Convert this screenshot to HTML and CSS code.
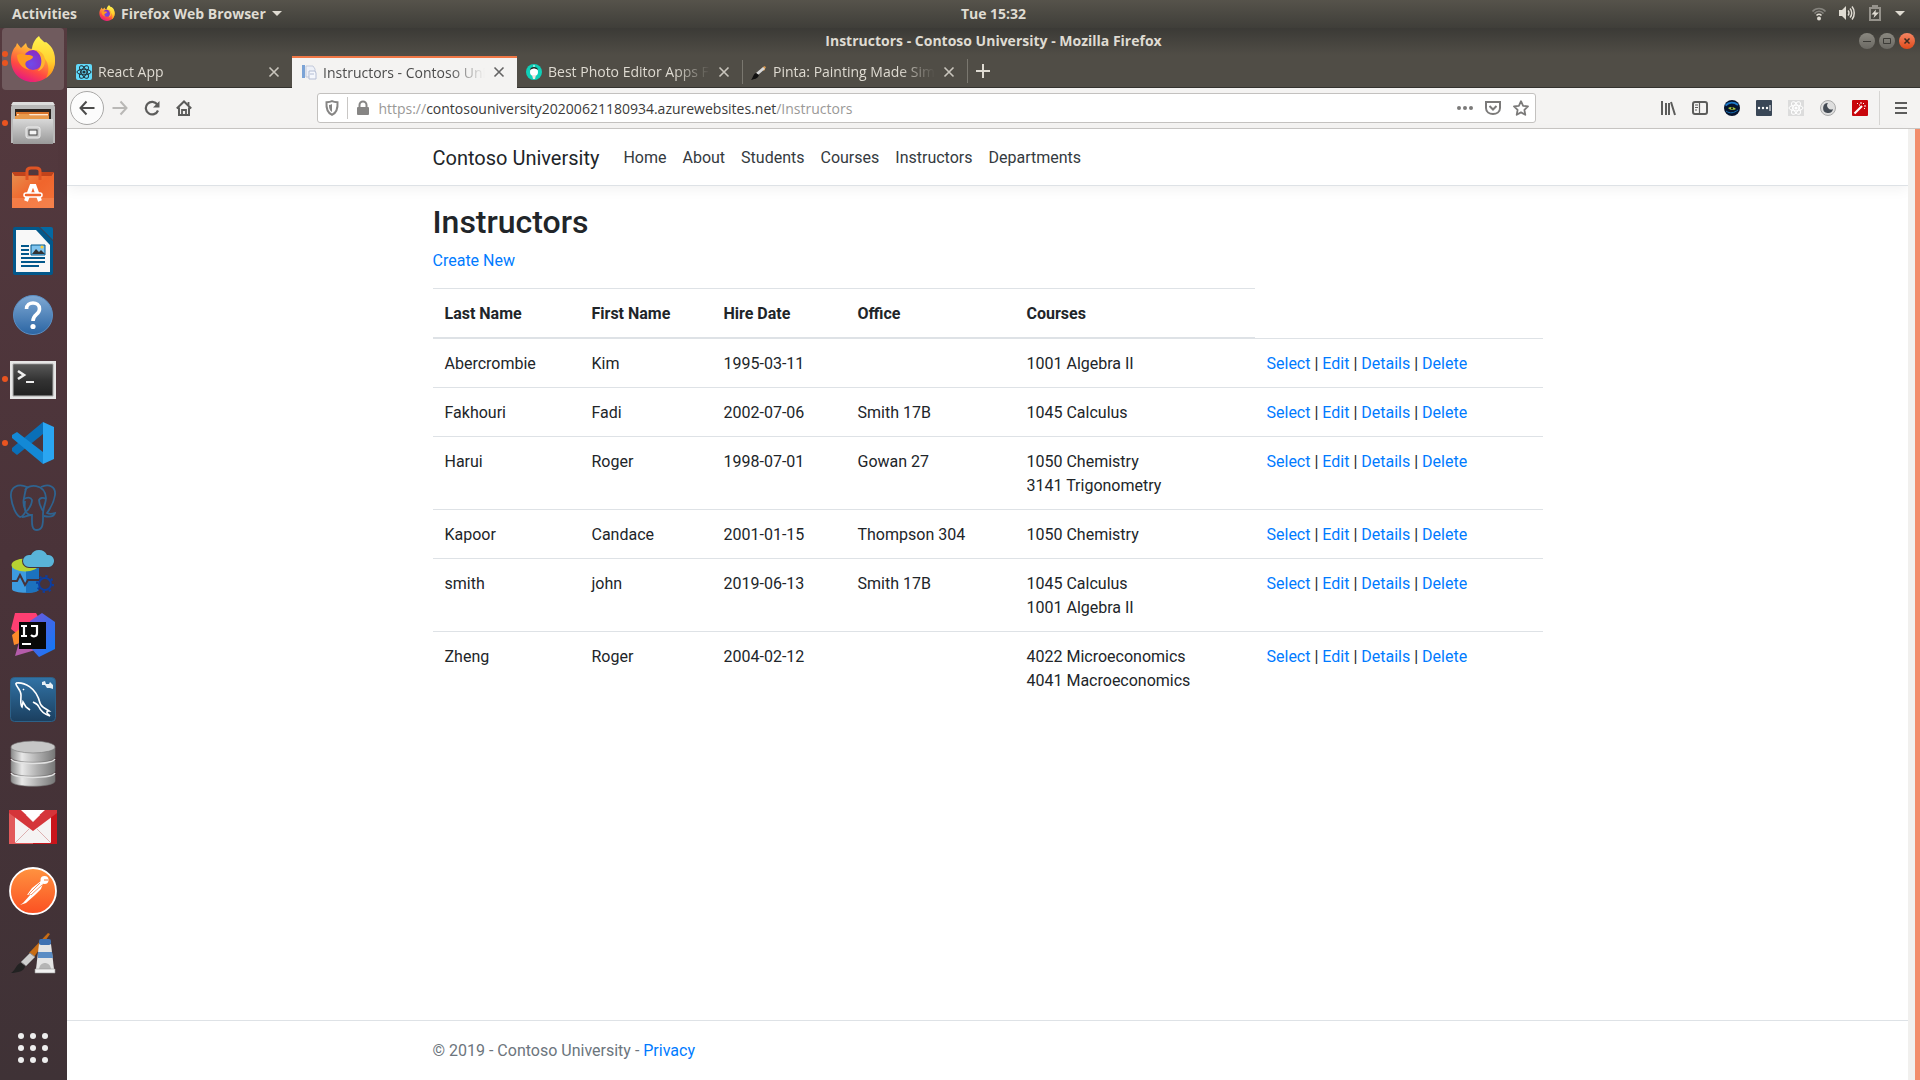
FILE: index.html
```html
<!DOCTYPE html>
<html lang="en">
<head>
<meta charset="utf-8">
<title>Instructors - Contoso University</title>
<link rel="stylesheet" href="styles.css">
</head>
<body>
<svg class="defs" aria-hidden="true">
  <defs>
    <linearGradient id="fx-body" x1="0.8" y1="0" x2="0.3" y2="1"><stop offset="0" stop-color="#fff44f"/><stop offset=".35" stop-color="#ffa436"/><stop offset=".7" stop-color="#ff4a42"/><stop offset="1" stop-color="#e31587"/></linearGradient>
    <linearGradient id="fx-flame" x1="0" y1="0" x2="0" y2="1"><stop offset="0" stop-color="#fff44f"/><stop offset=".6" stop-color="#ffd02f"/><stop offset="1" stop-color="#ff8a16"/></linearGradient>
    <radialGradient id="fx-globe" cx=".4" cy=".7" r=".7"><stop offset="0" stop-color="#6f4bea"/><stop offset="1" stop-color="#8a2bc2"/></radialGradient>
    <linearGradient id="steel" x1="0" y1="0" x2="0" y2="1"><stop offset="0" stop-color="#d8d8d8"/><stop offset="1" stop-color="#999"/></linearGradient>
    <linearGradient id="disk" x1="0" y1="0" x2="1" y2="0"><stop offset="0" stop-color="#8a8a8a"/><stop offset=".25" stop-color="#e8e8e8"/><stop offset=".6" stop-color="#b0b0b0"/><stop offset="1" stop-color="#777"/></linearGradient>
    <linearGradient id="bag" x1="0" y1="0" x2="1" y2="1"><stop offset="0" stop-color="#e79150"/><stop offset=".5" stop-color="#f0652c"/><stop offset="1" stop-color="#f4733a"/></linearGradient>
    <linearGradient id="help" x1="0" y1="0" x2="0" y2="1"><stop offset="0" stop-color="#7fa9d4"/><stop offset="1" stop-color="#2b65a3"/></linearGradient>
    <linearGradient id="term" x1="0" y1="0" x2="0" y2="1"><stop offset="0" stop-color="#575757"/><stop offset=".5" stop-color="#333"/><stop offset="1" stop-color="#222"/></linearGradient>
    <linearGradient id="wb" x1="0" y1="0" x2="0" y2="1"><stop offset="0" stop-color="#3173a6"/><stop offset="1" stop-color="#1b3f5f"/></linearGradient>
    <linearGradient id="pm" x1="0" y1="0" x2="0" y2="1"><stop offset="0" stop-color="#ff9340"/><stop offset="1" stop-color="#fb5022"/></linearGradient>
    <linearGradient id="ij-blue" x1="0" y1="0" x2="1" y2="1"><stop offset="0" stop-color="#7655d8"/><stop offset="1" stop-color="#087cfa"/></linearGradient>
    <symbol id="firefox" viewBox="0 0 46 46">
      <path d="M23 46C10 46 1 36 1 24c0-6 2-11 5-14l1-3 4 5 5-5c1 4 2 5 5 6L36 6c7 5 9 11 9 18 0 12-9 22-22 22z" fill="url(#fx-body)"/>
      <path d="M29 0c2 6 16 10 16 25 0 8-4 14-9 17 3-5 3-11 1-16-3-7-11-8-15-12 0-6 3-11 7-14z" fill="url(#fx-flame)"/>
      <circle cx="23" cy="24" r="10" fill="url(#fx-globe)"/>
      <path d="M7 19c5-3 8 0 12 0 2 0 4 1 4 2-1 3-5 3-7 5-2 3 1 6 4 8-8-1-13-8-13-15z" fill="#ff9a1f"/>
      <path d="M25 14c5 0 10 4 10 11 0 5-3 9-7 10 4-5 6-15-3-21z" fill="#ffb52e"/>
    </symbol>
    <symbol id="close" viewBox="0 0 16 16"><path d="M3.500 3.500l9 9m0-9l-9 9" stroke="currentColor" stroke-width="1.600" fill="none"/></symbol>
    <symbol id="atom" viewBox="0 0 16 16"><g fill="none" stroke="currentColor" stroke-width="1"><ellipse cx="8" cy="8" rx="7" ry="2.800"/><ellipse cx="8" cy="8" rx="7" ry="2.800" transform="rotate(60 8 8)"/><ellipse cx="8" cy="8" rx="7" ry="2.800" transform="rotate(120 8 8)"/></g><circle cx="8" cy="8" r="1.600" fill="currentColor"/></symbol>
  </defs>
</svg>

<header class="topbar">
  <div class="topbar-left">
    <button class="bar-button">Activities</button>
    <button class="bar-button app-menu"><svg width="16" height="16"><use href="#firefox"/></svg>Firefox Web Browser<span class="caret"></span></button>
  </div>
  <button class="bar-button clock">Tue 15:32</button>
  <button class="bar-button tray" aria-label="System menu">
    <svg width="16" height="16" viewBox="0 0 16 16" fill="none" stroke-width="1.600"><path d="M1.500 6.500C5 2.500 11 2.500 14.500 6.500" stroke="#85837d"/><path d="M3.500 8.500c2.500-3 6.500-3 9 0" stroke="#85837d"/><path d="M5.500 10.500c1.500-1.600 3.500-1.600 5 0" stroke="#dfdbd2"/><circle cx="8" cy="13.500" r="2" fill="#dfdbd2"/></svg>
    <svg width="16" height="16" viewBox="0 0 16 16" fill="none" stroke="#dfdbd2" stroke-width="1.500"><path d="M0 5h3l4-4v14l-4-4H0z" fill="#dfdbd2" stroke="none"/><path d="M9 5.500c1.300 1.300 1.300 3.700 0 5M11 3.500c2.300 2.400 2.300 6.600 0 9M13 1.500c3 3.500 3 9.500 0 13"/></svg>
    <svg width="16" height="16" viewBox="0 0 16 16"><path d="M5 0h6v2h3v14H2V2h3zM4 4v10h8V4z" fill="#96938c" fill-rule="evenodd"/><path d="M9 4.500L4.500 9.500h3L6.500 13 12 7.500H8.500z" fill="#dfdbd2"/></svg>
    <span class="caret"></span>
  </button>
</header>

<div class="workspace">
  <nav class="dock" aria-label="Applications">
    <button class="app active running-2" aria-label="Firefox"><svg width="46" height="46"><use href="#firefox"/></svg></button>
    <button class="app running" aria-label="Files"><svg width="48" height="48" viewBox="0 0 48 48"><path d="M4 3h40l2 5v36H2V8z" fill="#b9b9b9"/><path d="M4 3h40l2 3H2z" fill="#ddd"/><path d="M6 10h36v12H6z" fill="#2b2522"/><path d="M7 13h33v8H7z" fill="#d9742b"/><path d="M8 15h31v1.500H8z" fill="#ffe9cf"/><path d="M6 17h3l1-2h10l1 2h19v4H6z" fill="#e89a4c"/><path d="M4 20h40v25H4z" fill="url(#steel)"/><rect x="17" y="28" width="14" height="11" rx="2" fill="#c8c8c8" stroke="#eee"/><rect x="20" y="31" width="8" height="5" fill="#f4f4f4" stroke="#444"/></svg></button>
    <button class="app" aria-label="Ubuntu Software"><svg width="48" height="48" viewBox="0 0 48 48"><path d="M3 9l3 4h36l3-4v36H3z" fill="url(#bag)"/><path d="M3 9l3 4h36l3-4H31v3H19V9z" fill="#c2431b"/><path d="M3 35h42v10H3z" fill="#f68a57" opacity=".6"/><path d="M18 17V8q0-3 4-3h5q4 0 4 3v9" fill="none" stroke="#df5424" stroke-width="3"/><path d="M17 38l5.500-15h3L31 38" fill="none" stroke="#fff" stroke-width="4"/><rect x="15" y="30" width="18" height="4" rx="2" fill="#f0652c" stroke="#fff" stroke-width="1.500"/></svg></button>
    <button class="app" aria-label="LibreOffice Writer"><svg width="48" height="48" viewBox="0 0 48 48"><path d="M6 0h24l14 14v32q0 2-2 2H6q-2 0-2-2V2q0-2 2-2z" fill="#02588b"/><path d="M31 0h11q2 0 2 2v11z" fill="#0369a3"/><path d="M7 3h20l14 15v27H7z" fill="#f8f8f8"/><g stroke="#02588b" stroke-width="2"><path d="M12 19h8M12 23h8M12 27h8M12 31h24M12 35h24M12 39h18"/></g><path d="M22 18h14v10H22z" fill="#7fc4ef" stroke="#02588b"/><path d="M23 27l4-5 3 3 2-2 4 4z" fill="#333"/><circle cx="33" cy="20" r="1.500" fill="#fc3"/></svg></button>
    <button class="app" aria-label="Help"><svg width="48" height="48" viewBox="0 0 48 48"><circle cx="24" cy="24" r="19.500" fill="url(#help)" stroke="#5b8fc4"/><path d="M17.500 18c0-8 13-8 13 0 0 6-6.500 5-6.500 12" fill="none" stroke="#fff" stroke-width="3.600"/><circle cx="24" cy="35.500" r="2.600" fill="#fff"/></svg></button>
    <button class="app running" aria-label="Terminal"><svg width="48" height="48" viewBox="0 0 48 48"><path d="M1 6h46v38H1z" fill="#e6e6e6"/><path d="M4 9h40v32H4z" fill="#333" stroke="#aaa"/><path d="M5 10h38v30H5z" fill="url(#term)"/><path d="M9 16l6 4-6 4" fill="none" stroke="#eee" stroke-width="2.600"/><path d="M17 27h8" stroke="#eee" stroke-width="2"/></svg></button>
    <button class="app running" aria-label="Visual Studio Code"><svg width="48" height="48" viewBox="0 0 48 48"><path d="M34 3v12L8 36l-5-4v-3z" fill="#0a6fb8"/><path d="M3 16l5-3 26 20v12L3 19z" fill="#1389d6"/><path d="M34 3l11 5v32l-11 5z" fill="#2aa6f2"/></svg></button>
    <button class="app" aria-label="pgAdmin"><svg width="48" height="48" viewBox="0 0 48 48" fill="none" stroke="#2f638f" stroke-width="1.800"><path d="M18 4C9 0 1 4 2 14c1 9 5 18 9 20 3 0 4-3 6-6-3-5-3-9-2-13 1-4 1-8 3-11z"/><path d="M16 7c3-6 20-7 21 8 0 5-3 9-3 16 0 6 1 16-6 16-6 0-5-8-5-15-7 0-8-6-7-14"/><path d="M32 4c8-4 15 0 14 8-1 7-5 14-8 18 2 1 5 1 8 0-1 4-6 4-11 3M13 34c4 0 5-2 10-2"/><path d="M15 16c3-2 7-2 8 1 0 5-2 7-5 11M37 16c-3-2-6-1-7 1 0 5 2 7 4 11"/></svg></button>
    <button class="app" aria-label="Azure Data Studio"><svg width="48" height="48" viewBox="0 0 48 48"><path d="M3 18v24c0 5 27 5 27 0V18z" fill="#3d9be0"/><path d="M17 20h13v22c0 3-7 4-13 4z" fill="#1c72be"/><ellipse cx="16" cy="18" rx="13.500" ry="6.500" fill="#b7d332"/><path d="M2 34h6l3-6 5 10 3-5h12" fill="none" stroke="#46333a" stroke-width="2"/><path d="M20 20a6 6 0 0 1 0-12h2a9 9 0 0 1 16 0 6 6 0 0 1 2 12z" fill="#59b4d9" stroke="#46333a" stroke-width="2" paint-order="stroke"/><circle cx="36" cy="37" r="6" fill="#46333a" stroke="#0c3ea0" stroke-width="2"/><circle cx="36" cy="37" r="8" fill="none" stroke="#0c3ea0" stroke-width="2" stroke-dasharray="2.300 4"/></svg></button>
    <button class="app" aria-label="IntelliJ IDEA"><svg width="48" height="48" viewBox="0 0 48 48"><path d="M6 2l21 0 8 14-20 12L2 18z" fill="#fe3f72"/><path d="M3 24l10-8 4 14-12 4z" fill="#fc8b2a"/><path d="M6 45l5-17 22 9z" fill="#b55caa"/><path d="M33 2l13 9v27L30 46l-9-10V10z" fill="url(#ij-blue)"/><path d="M10 11h27v27H10z" fill="#080808"/><g fill="none" stroke="#fff" stroke-width="2.200"><path d="M12 15h6M15 15v10M12 25h6M22 15h6v7c0 4-4 4-6 2M13 33h9"/></g></svg></button>
    <button class="app" aria-label="MySQL Workbench"><svg width="48" height="48" viewBox="0 0 48 48"><rect x="1.500" y="2.500" width="45" height="44" rx="4" fill="url(#wb)" stroke="#2d6188"/><path d="M7 8c8-1 20 4 24 20 1 4 5 5 9 8-3 0-3 2 1 5-6-2-9-4-11-9-1-3-4-4-6-5M7 8c-1 3 5 6 5 12 0 5-1 10 1 12l1-5 3 5 4 3M14 14l1 1" fill="none" stroke="#fff" stroke-width="1.600"/><path d="M33 7l3-1 1 3 3 0 1-2 3 3v4l-3-1-3 0-2-3-3 0z" fill="#e7f0f6"/></svg></button>
    <button class="app" aria-label="Database"><svg width="48" height="48" viewBox="0 0 48 48"><g stroke="#777" stroke-width=".6"><path d="M2 36v6c0 7 44 7 44 0v-6z" fill="url(#disk)"/><path d="M2 22v10c0 7 44 7 44 0V22z" fill="url(#disk)"/><path d="M2 8v10c0 7 44 7 44 0V8z" fill="url(#disk)"/><ellipse cx="24" cy="8" rx="22" ry="6" fill="#c6c6c6"/></g><path d="M2 20c3 6 41 6 44 0M2 34c3 6 41 6 44 0" fill="none" stroke="#e2e2e2" stroke-width="1.500"/></svg></button>
    <button class="app" aria-label="Gmail"><svg width="48" height="48" viewBox="0 0 48 48"><path d="M0 7h48v34H0z" fill="#c9151b"/><path d="M0 7h24v34H0z" fill="#e2595a"/><path d="M6 12h36v28H6z" fill="#f5f3f3"/><path d="M6 40l14-14M42 40L28 26" stroke="#ddb0b0"/><path d="M0 7h12l12 12L36 7h12v3L24 28 0 10z" fill="#d5353a"/><path d="M12 7h24L24 18z" fill="#fff"/></svg></button>
    <button class="app" aria-label="Postman"><svg width="48" height="48" viewBox="0 0 48 48"><circle cx="24" cy="24" r="23" fill="url(#pm)" stroke="#fff" stroke-width="1.800"/><circle cx="35.500" cy="13" r="4" fill="#fff"/><path d="M35 13h4" stroke="#f77637"/><path d="M32 14l-9 7-5 7 4-1-8 9-3 2 6-2 9-8 6-6 2-6z" fill="#fff"/><path d="M31 16l-11 11M33 18L22 28" stroke="#f77637" stroke-width=".8"/></svg></button>
    <button class="app" aria-label="Pinta"><svg width="48" height="48" viewBox="0 0 48 48"><path d="M41 3l-2-1-19 20 5 4z" fill="#c76c14"/><path d="M21 22l5 4-9 9-5-4z" fill="#cfcfcf" stroke="#888"/><path d="M12 32l4 3c0 5-8 7-14 7 5-3 5-9 10-10z" fill="#222"/><path d="M27 38l3-25h12l3 25z" fill="#e4e4e4"/><path d="M29 21h14l1 6H29z" fill="#5a8cc4"/><rect x="30" y="8" width="12" height="6" rx="2" fill="#3f72b2"/><path d="M30 38c1-8 11-8 12 0z" fill="#b5b5b5"/><path d="M26 38h20v4H26z" fill="#f2f2f2" stroke="#999" stroke-width=".6"/></svg></button>
    <button class="app show-apps" aria-label="Show applications"><svg width="32" height="32" viewBox="0 0 32 32" fill="#eee"><circle cx="4" cy="4" r="3"/><circle cx="16" cy="4" r="3"/><circle cx="28" cy="4" r="3"/><circle cx="4" cy="16" r="3"/><circle cx="16" cy="16" r="3"/><circle cx="28" cy="16" r="3"/><circle cx="4" cy="28" r="3"/><circle cx="16" cy="28" r="3"/><circle cx="28" cy="28" r="3"/></svg></button>
  </nav>

  <div class="window">
    <div class="titlebar">
      <span class="window-title">Instructors - Contoso University - Mozilla Firefox</span>
      <div class="window-buttons">
        <button class="wbtn" aria-label="Minimize"><svg width="16" height="16" viewBox="0 0 16 16"><path d="M4 8.500h8" stroke="#3c3b37"/></svg></button>
        <button class="wbtn" aria-label="Maximize"><svg width="16" height="16" viewBox="0 0 16 16"><path d="M4.500 5.500h7v5h-7z" fill="none" stroke="#3c3b37"/></svg></button>
        <button class="wbtn wbtn-close" aria-label="Close"><svg width="16" height="16" viewBox="0 0 16 16"><path d="M5.500 5.500l5 5m0-5l-5 5" stroke="#3c2b20" stroke-width="1.500"/></svg></button>
      </div>
    </div>
    <div class="tabs">
      <div class="tab"><svg class="react" width="16" height="16"><use href="#atom"/></svg><span class="tab-label">React App</span><button class="tab-close" aria-label="Close tab"><svg width="16" height="16"><use href="#close"/></svg></button></div>
      <div class="tab tab-active"><svg width="16" height="16" viewBox="0 0 16 16"><path d="M1 1h3v13H1z" fill="#7ba3d6"/><path d="M5 2h7l2 3v8H5z" fill="#eef1f8" stroke="#c3cadb"/><path d="M8 7h6l1 2v6H8z" fill="#f5f7fc" stroke="#b4bdd3"/><path d="M9 10h4" stroke="#b4bdd3"/></svg><span class="tab-label">Instructors - Contoso University</span><button class="tab-close" aria-label="Close tab"><svg width="16" height="16"><use href="#close"/></svg></button></div>
      <div class="tab"><svg width="16" height="16" viewBox="0 0 16 16"><circle cx="8" cy="8" r="8" fill="#0fcfb8"/><circle cx="8" cy="8" r="4" fill="#fff"/><path d="M4 6c0-4 8-4 8 0-3-2-5-2-8 0z" fill="#222"/><path d="M6 11h4l-1 4H7z" fill="#f4e4e0"/><path d="M8 1v2" stroke="#fff"/></svg><span class="tab-label">Best Photo Editor Apps For Linux</span><button class="tab-close" aria-label="Close tab"><svg width="16" height="16"><use href="#close"/></svg></button></div>
      <div class="tab tab-line"><svg width="16" height="16" viewBox="0 0 16 16"><path d="M13 2l2 1-2 4-2-2z" fill="#e09a4a"/><path d="M12 3l2 2-7 6-2-2z" fill="#d8d8d8"/><path d="M5 9l3 2c-1 4-5 4-8 5 2-2 2-6 5-7z" fill="#111"/></svg><span class="tab-label">Pinta: Painting Made Simple</span><button class="tab-close" aria-label="Close tab"><svg width="16" height="16"><use href="#close"/></svg></button></div>
      <button class="new-tab tab-line" aria-label="New tab"><svg width="16" height="16" viewBox="0 0 16 16"><path d="M8 1v14M1 8h14" stroke="currentColor" stroke-width="2"/></svg></button>
    </div>
    <div class="toolbar">
      <div class="nav-buttons">
        <button class="tool back" aria-label="Back"><svg width="16" height="16" viewBox="0 0 16 16" fill="none" stroke="#4c4c4b" stroke-width="2"><path d="M15.500 8H1.500M7.500 1.500L1.500 8l6 6.500"/></svg></button>
        <button class="tool" aria-label="Forward"><svg width="16" height="16" viewBox="0 0 16 16" fill="none" stroke="#b9b8b6" stroke-width="2"><path d="M.5 8h14M8.500 1.500L14.500 8l-6 6.500"/></svg></button>
        <button class="tool" aria-label="Reload"><svg width="16" height="16" viewBox="0 0 16 16"><path d="M13.300 4.500A6.300 6.300 0 1 0 14 10.500" fill="none" stroke="#5c5c5b" stroke-width="2.200"/><path d="M15.500 1v6.500H9z" fill="#5c5c5b"/></svg></button>
        <button class="tool" aria-label="Home"><svg width="16" height="16" viewBox="0 0 16 16" fill="none" stroke="#5c5c5b" stroke-width="2"><path d="M.8 8.500L8 1.500l7.200 7M3 7.500V15h10V7.500" /><path d="M6 15v-5h4v5M12.500 2v3" stroke-width="1.800"/></svg></button>
      </div>
      <div class="urlbar">
        <svg width="16" height="16" viewBox="0 0 16 16"><path d="M8 1.200c2 1 4 1 5.500 1C14 9 12 13 8 14.800 4 13 2 9 2.500 2.200c1.500 0 3.500 0 5.500-1z" fill="none" stroke="#868584" stroke-width="2"/><path d="M8 4v8C5.500 10.500 5 8 5 5c1 0 2-.3 3-1z" fill="#868584"/></svg>
        <span class="url-sep"></span>
        <svg width="16" height="16" viewBox="0 0 16 16"><path d="M4.500 8V5a3.500 3.500 0 0 1 7 0v3" fill="none" stroke="#868584" stroke-width="2"/><rect x="2" y="7" width="12" height="8" rx="1" fill="#868584"/></svg>
        <a class="url" href="#">https://<b>contosouniversity20200621180934.azurewebsites.net</b>/Instructors</a>
        <span class="url-actions">
          <svg width="16" height="16" viewBox="0 0 16 16" fill="#7b7a79"><circle cx="2" cy="8" r="2"/><circle cx="8" cy="8" r="2"/><circle cx="14" cy="8" r="2"/></svg>
          <svg width="16" height="16" viewBox="0 0 16 16" fill="none" stroke="#7b7a79" stroke-width="2"><path d="M1 2h14v6c0 8-14 8-14 0z"/><path d="M4.500 6L8 9.500 11.500 6"/></svg>
          <svg width="16" height="16" viewBox="0 0 16 16" fill="none" stroke="#7b7a79" stroke-width="1.800" stroke-linejoin="round"><path d="M8 1.200l2.100 4.600 4.900.6-3.600 3.400.9 5L8 12.400l-4.300 2.400.9-5L1 6.400l4.900-.6z"/></svg>
        </span>
      </div>
      <div class="extensions">
        <button class="tool" aria-label="Library"><svg width="16" height="16" viewBox="0 0 16 16" stroke="#5c5c5b" stroke-width="2" fill="none"><path d="M2 1v14M6 3v12M9 3v12M11 2l4 13"/></svg></button>
        <button class="tool" aria-label="Sidebar"><svg width="16" height="16" viewBox="0 0 16 16" stroke="#5c5c5b" fill="none"><rect x="1" y="2" width="14" height="12" rx="2" stroke-width="2"/><path d="M7.500 2v12M3 5h3M3 7.500h3M3 10h2" stroke-width="1.200"/></svg></button>
        <button class="tool" aria-label="Eye extension"><svg width="16" height="16" viewBox="0 0 16 16"><circle cx="8" cy="8" r="8" fill="#06142e"/><path d="M1.500 5.500C5 2 10 2 14 5" stroke="#1c78c8" stroke-width="2" fill="none"/><path d="M4 8c3-2 6-1 8 1-3 1.500-6 1-8-1z" fill="#a9c93f"/><circle cx="8" cy="8.300" r="1" fill="#111"/><path d="M2 11c4 3 8 2 12-1" stroke="#1570b8" fill="none"/></svg></button>
        <button class="tool" aria-label="Password manager"><svg width="16" height="16" viewBox="0 0 16 16"><rect width="16" height="16" rx="1" fill="#3a4757"/><g fill="#fff"><circle cx="3" cy="8" r="1.200"/><circle cx="7" cy="8" r="1.200"/><circle cx="11" cy="8" r="1.200"/><path d="M13.500 5h1v6h-1z"/></g></svg></button>
        <button class="tool" aria-label="React developer tools"><svg class="react-off" width="16" height="16"><use href="#atom"/></svg></button>
        <button class="tool" aria-label="Dark mode"><svg width="16" height="16" viewBox="0 0 16 16"><circle cx="8" cy="8" r="7.500" fill="#dedede" stroke="#aaa"/><path d="M8 3a5 5 0 1 0 5 6 4 4 0 0 1-5-6z" fill="#444b54"/></svg></button>
        <button class="tool" aria-label="Magic wand"><svg width="16" height="16" viewBox="0 0 16 16"><rect width="16" height="16" rx="1" fill="#c8060c"/><path d="M2.500 13.500L10 6" stroke="#fff" stroke-width="2.200"/><path d="M5 3l1 1M9 2v2M12 3l-1 1M14 6h-2M13 9l-1-1M7 5h1" stroke="#fff"/></svg></button>
        <span class="tool-sep"></span>
        <button class="tool menu" aria-label="Menu"><svg width="12" height="16" viewBox="0 0 12 16"><path d="M0 3h12M0 8h12M0 13h12" stroke="#5c5c5b" stroke-width="2"/></svg></button>
      </div>
    </div>

    <div class="viewport">
      <div class="page">
        <header class="site-header">
          <nav class="container navbar">
            <a class="brand" href="#">Contoso University</a>
            <a href="#">Home</a><a href="#">About</a><a href="#">Students</a><a href="#">Courses</a><a href="#">Instructors</a><a href="#">Departments</a>
          </nav>
        </header>
        <main class="container">
          <h1>Instructors</h1>
          <p><a href="#">Create New</a></p>
          <table>
            <colgroup><col class="c-last"><col class="c-first"><col class="c-hire"><col class="c-office"><col class="c-courses"><col></colgroup>
            <thead><tr><th scope="col">Last Name</th><th scope="col">First Name</th><th scope="col">Hire Date</th><th scope="col">Office</th><th scope="col">Courses</th></tr></thead>
            <tbody>
              <tr><td>Abercrombie</td><td>Kim</td><td>1995-03-11</td><td></td><td>1001 Algebra II</td><td><a href="#">Select</a> | <a href="#">Edit</a> | <a href="#">Details</a> | <a href="#">Delete</a></td></tr>
              <tr><td>Fakhouri</td><td>Fadi</td><td>2002-07-06</td><td>Smith 17B</td><td>1045 Calculus</td><td><a href="#">Select</a> | <a href="#">Edit</a> | <a href="#">Details</a> | <a href="#">Delete</a></td></tr>
              <tr><td>Harui</td><td>Roger</td><td>1998-07-01</td><td>Gowan 27</td><td>1050 Chemistry<br>3141 Trigonometry</td><td><a href="#">Select</a> | <a href="#">Edit</a> | <a href="#">Details</a> | <a href="#">Delete</a></td></tr>
              <tr><td>Kapoor</td><td>Candace</td><td>2001-01-15</td><td>Thompson 304</td><td>1050 Chemistry</td><td><a href="#">Select</a> | <a href="#">Edit</a> | <a href="#">Details</a> | <a href="#">Delete</a></td></tr>
              <tr><td>smith</td><td>john</td><td>2019-06-13</td><td>Smith 17B</td><td>1045 Calculus<br>1001 Algebra II</td><td><a href="#">Select</a> | <a href="#">Edit</a> | <a href="#">Details</a> | <a href="#">Delete</a></td></tr>
              <tr><td>Zheng</td><td>Roger</td><td>2004-02-12</td><td></td><td>4022 Microeconomics<br>4041 Macroeconomics</td><td><a href="#">Select</a> | <a href="#">Edit</a> | <a href="#">Details</a> | <a href="#">Delete</a></td></tr>
            </tbody>
          </table>
        </main>
        <footer class="site-footer"><div class="container">© 2019 - Contoso University - <a href="#">Privacy</a></div></footer>
      </div>
      <div class="scroll-gutter"></div>
      <div class="scroll-thumb"></div>
    </div>
  </div>
</div>
</body>
</html>
```
FILE: styles.css
```css
* { box-sizing: border-box; }

body {
  margin: 0;
  min-height: 100vh;
  display: flex;
  flex-direction: column;
  font-family: "Open Sans", "Noto Sans", sans-serif;
  font-size: 14px;
  color: #dfdbd2;
  background: #3c3b37;
}

button {
  display: flex;
  align-items: center;
  justify-content: center;
  margin: 0;
  padding: 0;
  border: 0;
  background: none;
  font: inherit;
  color: inherit;
}

svg { display: block; flex: none; }
.defs { position: absolute; width: 0; height: 0; }

/* Desktop top bar; the clock is centred on the area right of the dock */
.topbar {
  display: grid;
  grid-template-columns: 70px 1fr auto 1fr;
  align-items: start;
  height: 28px;
  padding: 0 15px 0 12px;
  background: linear-gradient(#56534b, #3f3e39);
  font-weight: 700;
}
.topbar-left { grid-column: 1 / 3; }
.topbar-left, .tray { display: flex; align-items: center; }
.topbar-left { gap: 22px; }
.bar-button { height: 26px; }
.app-menu { gap: 6px; }
.tray { justify-self: end; gap: 12px; }
.caret {
  border: 5px solid transparent;
  border-top-color: currentColor;
  border-bottom: 0;
}

.workspace { flex: 1; display: flex; }

/* Dock */
.dock {
  width: 67px;
  display: flex;
  flex-direction: column;
  align-items: center;
  gap: 2px;
  padding-right: 1px;
  background: linear-gradient(#553a3f, #4a3339 50%, #3f3236);
}
.app {
  position: relative;
  width: 62px;
  height: 62px;
  border-radius: 4px;
}
.active { background: #705b5e; }
.running::before, .running-2::before, .running-2::after {
  content: "";
  position: absolute;
  left: 0;
  top: 28px;
  width: 6px;
  height: 6px;
  border-radius: 50%;
  background: #e95420;
}
.running-2::before { top: 23px; }
.running-2::after { top: 32px; }
.show-apps { margin: auto 0 1px; }

/* Browser window */
.window { flex: 1; min-width: 0; display: flex; flex-direction: column; background: #f4f3f2; }
.titlebar {
  display: grid;
  grid-template-columns: 1fr auto 1fr;
  align-items: center;
  height: 27px;
  padding: 0 5px 2px 5px;
  background: linear-gradient(#3b3a36, #504d46);
  font-weight: 700;
}
.window-title { grid-column: 2; }
.window-buttons { justify-self: end; display: flex; gap: 4px; }
.wbtn { width: 16px; height: 16px; border-radius: 50%; background: linear-gradient(#8a8880, #6b6963); }
.wbtn-close { background: linear-gradient(#f58563, #df4a1a); }

.tabs { display: flex; height: 33px; background: #504d46; border-bottom: 1px solid #33322e; }
.tab {
  display: flex;
  align-items: center;
  gap: 6px;
  width: 225px;
  height: 33px;
  padding: 2px 10px 2px 9px;
}
.tab-label {
  flex: 1;
  min-width: 0;
  overflow: hidden;
  white-space: nowrap;
  mask-image: linear-gradient(to left, transparent, #000 36px);
}
.tab-active {
  height: 32px;
  margin-top: 1px;
  padding-top: 0;
  background: #f4f3f2;
  color: #4c4c4c;
  border-top: 2px solid #f07746;
}
.tab-line { background: linear-gradient(#7a776f, #7a776f) left center / 1px 24px no-repeat; }
.react { background: #61dafb; color: #20323a; border-radius: 2px; }
.new-tab { width: 32px; }
.tab-close { opacity: .85; }

.toolbar {
  display: flex;
  align-items: center;
  height: 41px;
  padding: 0 3px;
  border-bottom: 1px solid #c9c7c5;
}
.nav-buttons, .extensions, .url-actions { display: flex; align-items: center; }
.nav-buttons { flex: 13 1 0; }
.tool { width: 32px; height: 32px; }
.back { width: 34px; height: 34px; border: 1px solid #a9a8a7; border-radius: 50%; background: #fcfcfc; }
.urlbar {
  display: flex;
  align-items: center;
  flex: 0 0 66%;
  height: 30px;
  padding: 0 6px;
  gap: 7px;
  border: 1px solid #c3c1bf;
  border-radius: 3px;
  background: #fff;
}
.url-sep { width: 1px; height: 22px; background: #c9c7c5; }
.url { flex: 1; color: #9a9997; text-decoration: none; }
.url b { font-weight: 400; color: #3b3b3a; }
.url-actions { gap: 12px; }
.extensions { flex: 20 1 0; justify-content: flex-end; }
.react-off { background: #dcdcdc; color: #fff; }
.tool-sep { width: 1px; height: 34px; margin: 0 5px 0 3px; background: #d6d5d3; }

/* Web page */
.viewport { flex: 1; display: flex; }
.page {
  flex: 1;
  min-width: 0;
  display: flex;
  flex-direction: column;
  background: #fff;
  color: #212529;
  font-family: Roboto, sans-serif;
  font-size: 16px;
  line-height: 24px;
}
.scroll-gutter { width: 7px; background: #f1f0ee; }
.scroll-thumb { width: 5px; background: #f28d6b; }
.container { width: 100%; max-width: 1140px; margin: 0 auto; padding: 0 15px; }
.page a { color: #007bff; text-decoration: none; }

.site-header {
  padding: 9px 0 7px;
  margin-bottom: 16px;
  border-bottom: 1px solid #dee2e6;
  box-shadow: 0 4px 12px rgba(0, 0, 0, .05);
}
.navbar { display: flex; align-items: center; gap: 16px; height: 40px; }
.page .navbar a { color: #343a40; }
.page .navbar .brand { margin-right: 8px; font-size: 20px; line-height: 30px; color: #212529; }

main { flex: 1; }
h1 { margin: 0 0 7px; font-size: 32px; line-height: 40px; font-weight: 500; }
p { margin: 0 0 15px; }

table { width: 100%; table-layout: fixed; border-collapse: collapse; }
th, td { padding: 13px 12px 11px; border-top: 1px solid #dee2e6; text-align: left; vertical-align: top; }
th { border-bottom: 2px solid #dee2e6; }
.c-last { width: 147px; }
.c-first { width: 132px; }
.c-hire { width: 134px; }
.c-office { width: 169px; }
.c-courses { width: 240px; }

.site-footer { padding-top: 1px; border-top: 1px solid #dee2e6; line-height: 58px; color: #6c757d; }
```
